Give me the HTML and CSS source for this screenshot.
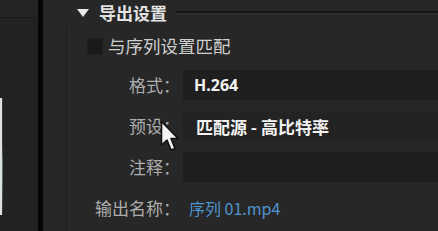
FILE: index.html
```html
<!DOCTYPE html>
<html lang="zh-CN">
<head>
<meta charset="utf-8">
<link rel="stylesheet" href="styles.css">
</head>
<body>
<div class="app">
  <div class="left">
    <div class="left-top"></div>
    <div class="thumb"></div>
  </div>
  <div class="divider"></div>
  <div class="right">
    <div class="header">
      <span class="tri"></span>
      <span class="title">导出设置</span>
      <span class="hline"></span>
    </div>
    <div class="content">
      <div class="check-row">
        <span class="checkbox"></span>
        <span class="check-label">与序列设置匹配</span>
      </div>
      <div class="form">
        <div class="label">格式：</div>
        <div class="field"><span class="value latin">H.264</span></div>
        <div class="label">预设：</div>
        <div class="field preset"><span class="value">匹配源 - 高比特率</span></div>
        <div class="label">注释：</div>
        <div class="field comment"></div>
        <div class="label">输出名称：</div>
        <div class="field plain"><span class="link">序列 01.mp4</span></div>
      </div>
    </div>
  </div>
</div>
<svg class="cursor" width="20" height="34" viewBox="0 0 20 34">
  <path d="M1.5 1.5 L1.5 25 L7 20 L11 30 L15 28.5 L11 18.5 L18 18.5 Z" fill="#f4f4f4" stroke="#111" stroke-width="1.6" stroke-linejoin="round"/>
</svg>
</body>
</html>
```

FILE: styles.css
```css
html, body {
  margin: 0;
  padding: 0;
  width: 438px;
  height: 231px;
  overflow: hidden;
  background: #262626;
  font-family: "Noto Sans CJK SC", "Noto Sans", sans-serif;
}
.app {
  display: flex;
  width: 438px;
  height: 231px;
}
.left {
  width: 38px;
  background: #222222;
  display: flex;
  flex-direction: column;
}
.left-top {
  height: 17px;
  background: #242424;
  border-bottom: 1px solid #1a1a1a;
  margin-bottom: 80px;
}
.thumb {
  width: 1px;
  height: 117px;
  border-left: 2px solid #e0e0e0;
  background: linear-gradient(#3a3a3a 0%, #3a3a3a 40%, #5a7a60 55%, #44634d 80%, #2c2c2c 100%);
}
.divider {
  width: 5px;
  background: #060606;
}
.right {
  flex: 1;
  background: #272727;
  display: flex;
  flex-direction: column;
  position: relative;
}
.header {
  height: 26px;
  display: flex;
  align-items: center;
  padding-left: 34px;
}
.tri {
  width: 0;
  height: 0;
  border-left: 6px solid transparent;
  border-right: 6px solid transparent;
  border-top: 8px solid #e8e8e8;
  margin-right: 10px;
}
.title {
  font-size: 17px;
  font-weight: bold;
  color: #e2e2e2;
  line-height: 26px;
  margin-top: -1px;
}
.hline {
  flex: 1;
  height: 2px;
  background: #151515;
  border-bottom: 2px solid #2c2c2c;
  margin-left: 9px;
  margin-top: -1px;
}
.content {
  margin-left: 23px;
  border-left: 1px solid #1f1f1f;
  flex: 1;
  display: flex;
  flex-direction: column;
}
.check-row {
  display: flex;
  align-items: center;
  height: 40px;
  padding-left: 20px;
}
.checkbox {
  width: 16px;
  height: 17px;
  background: #1a1a1a;
  border: 1px solid #202020;
  box-sizing: border-box;
  margin-right: 5px;
}
.check-label {
  font-size: 17.5px;
  color: #cfcfcf;
  line-height: 20px;
}
.form {
  display: grid;
  grid-template-columns: 113px 1fr;
  column-gap: 3px;
  row-gap: 11px;
  margin-top: 4px;
}
.label {
  font-size: 17px;
  color: #adadad;
  text-align: right;
  height: 30px;
  line-height: 30px;
  white-space: nowrap;
}
.field {
  height: 30px;
  background: #1f1f1f;
  display: flex;
  align-items: center;
  padding-left: 11px;
}
.field.preset {
  background: #232323;
  padding-left: 13px;
}
.field.comment {
  background: #1e1e1e;
}
.field.plain {
  background: transparent;
  padding-left: 6px;
}
.value {
  font-size: 17px;
  color: #f2f2f2;
  font-weight: bold;
  white-space: nowrap;
}
.value.latin {
  font-family: "Noto Sans", "Open Sans", sans-serif;
  font-size: 16px;
}
.link {
  font-size: 16px;
  color: #4f93cf;
  white-space: nowrap;
}
.cursor {
  position: absolute;
  left: 160px;
  top: 120px;
}
```
